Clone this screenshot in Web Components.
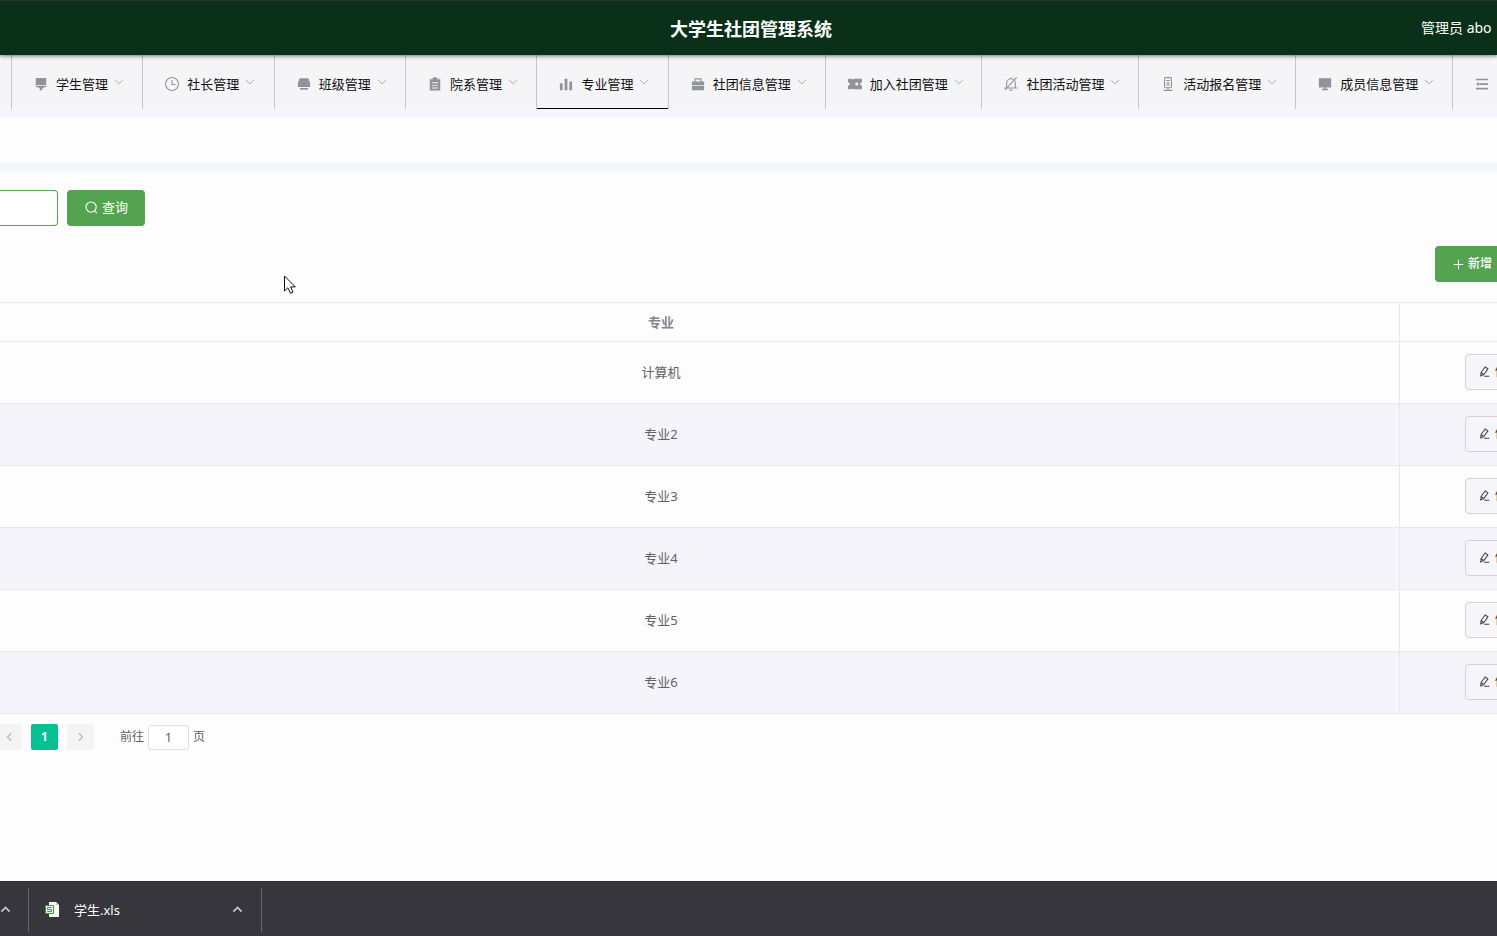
<!DOCTYPE html>
<html lang="zh-CN">
<head>
<meta charset="utf-8">
<title>大学生社团管理系统</title>
<style>
html,body{margin:0;height:100%}
body{font:13px/20px "Noto Sans","Noto Sans CJK SC",sans-serif;color:#606266;background:#fdfdfe;overflow:hidden}
</style>
</head>
<body>
<club-app></club-app>
<script>
const define = (name, css, html) => customElements.define(name, class extends HTMLElement {
  constructor() {
    super();
    this.attachShadow({ mode: 'open' }).innerHTML =
      `<style>*{box-sizing:border-box}svg{display:block;flex:none}button,input{font:inherit;margin:0}${css}</style>` +
      (typeof html === 'function' ? html(this) : html);
  }
});

const icons = {
  brush: '<path d="M2 1h12v8H2zM2 10h12v1l-3.500 1.200h-1V15h-3v-2.800h-1L2 11z"/>',
  clock: '<g fill="none" stroke="currentColor" stroke-width="1.200"><circle cx="8" cy="8" r="7.400"/><path d="M8 3.500v5h4"/></g>',
  printer: '<path d="M3 1.500h10L15 7v4.500H1V7zM3 12.500h10l-1 2H4z"/>',
  clipboard: '<path fill-rule="evenodd" d="M5 1h1.500l.7-1h1.600l.7 1H11v2h3v12.500H2V3h3zM4.500 6v1h7V6zm0 3v1h7V9zm0 3v1h7v-1z"/><path d="M2 2h2v1H2zm10 0h2v1h-2z"/>',
  bars: '<path d="M1 7h3.200v8H1zM6.400 2h3.200v13H6.400zM11.800 5H15v10h-3.200z"/>',
  briefcase: '<path fill-rule="evenodd" d="M4 1.500h8V5h3v4H1V5h3zm1.300 1.300V5h5.400V2.800zM1 10h14v5H1z"/>',
  ticket: '<path fill-rule="evenodd" d="M0 2h4.500l1 1 1-1H16v4a2 2 0 0 0 0 4v4H6.500l-1-1-1 1H0v-4a2 2 0 0 0 0-4zM10 5.500l-.8 1.600-1.700.3 1.200 1.200-.2 1.700 1.500-.8 1.500.8-.2-1.700 1.200-1.200-1.700-.3z"/>',
  bell: '<g fill="none" stroke="currentColor" stroke-width="1.200"><path d="M3 12.500V7a5 5 0 0 1 10 0v5.500M.5 12.500h15M6.500 15h3M8 .5V2M1 15 14.500.5"/></g>',
  mic: '<g fill="none" stroke="currentColor" stroke-width="1.200"><rect x="4" y=".7" width="8" height="11.500" rx="1.500"/><path d="M8 12.500v3M3 15.300h10M6 4h4M6 6.500h4M6 9h4"/></g>',
  monitor: '<path d="M1 1.500h14v10.500H1zM7 12h2v1.500h2.500V15h-7v-1.500H7z"/>',
  fold: '<path d="M1 2h14v1.800H1zM5 7.200h10V9H5zM1 12.400h14v1.800H1zM1 8.100 4.500 6v4.200z"/>',
  down: '<path d="m2 5 6 6 6-6" fill="none" stroke="currentColor" stroke-width="1.500"/>',
  up: '<path d="m2 11 6-6 6 6" fill="none" stroke="currentColor" stroke-width="2.500"/>',
  left: '<path d="m11 3-5 5 5 5" fill="none" stroke="currentColor" stroke-width="1.900"/>',
  right: '<path d="m5 3 5 5-5 5" fill="none" stroke="currentColor" stroke-width="1.900"/>',
  search: '<g fill="none" stroke="currentColor" stroke-width="1.400"><circle cx="7.500" cy="7.500" r="6.300"/><path d="m12 12 2.500 3"/></g>',
  plus: '<path d="M8 1v14M1 8h14" fill="none" stroke="currentColor" stroke-width="1.500"/>',
  edit: '<path d="M3 9.500 9 1.500l4 2.700-6 8.300-4.500 2zM3 9.500l4 3M7.500 15H15" fill="none" stroke="currentColor" stroke-width="1.500"/>'
};
const icon = (name, size) => `<svg width="${size}" height="${size}" viewBox="0 0 16 16" fill="currentColor" aria-hidden="true">${icons[name]}</svg>`;

define('club-header', `
:host{display:grid;grid-template-columns:1fr auto 1fr;align-items:center;height:55px;padding-left:5px;background:#0a3019;border-top:1px solid #28362c;color:#fff;position:relative;z-index:1;box-shadow:0 1px 4px #0008}
h1{grid-column:2;margin:0;padding-top:2px;font-size:18px;line-height:28px;font-weight:700}
span{justify-self:end;width:76px;font-size:14px;line-height:24px;white-space:nowrap}
`, '<h1>大学生社团管理系统</h1><span>管理员 abo</span>');

define('nav-item', `
:host{display:block;min-width:0;border-left:1px solid #c6c6cc}
a{display:flex;align-items:center;height:54px;padding:4px 0 0 22px;color:#101010;text-decoration:none;white-space:nowrap}
:host([active]) a{border-bottom:1px solid #000}
.icon{color:#909399;margin-right:8px}
.arrow{color:#a2a4a8;margin:0 0 4px 6px}
`, el => `<a href="#"><span class="icon">${icon(el.getAttribute('icon'), 14)}</span><slot></slot>${el.hasAttribute('bare') ? '' : `<span class="arrow">${icon('down', 10)}</span>`}</a>`);

define('club-nav', `
:host{display:grid;grid-template-columns:11px repeat(5,minmax(0,67fr)) repeat(5,minmax(0,80fr)) 45px;height:54px;background:#f5f4f7;overflow:hidden}
`, `<span></span>
<nav-item icon="brush">学生管理</nav-item><nav-item icon="clock">社长管理</nav-item><nav-item icon="printer">班级管理</nav-item><nav-item icon="clipboard">院系管理</nav-item><nav-item icon="bars" active>专业管理</nav-item><nav-item icon="briefcase">社团信息管理</nav-item><nav-item icon="ticket">加入社团管理</nav-item><nav-item icon="bell">社团活动管理</nav-item><nav-item icon="mic">活动报名管理</nav-item><nav-item icon="monitor">成员信息管理</nav-item><nav-item icon="fold" bare></nav-item>`);

define('club-toolbar', `
:host{display:block;padding-top:18px}
form{display:flex;gap:9px}
input{width:58px;height:36px;border:1px solid #53a351;border-left:0;border-radius:0 4px 4px 0;background:#fff;outline:0}
button{display:flex;align-items:center;height:36px;padding:0 18px;border:0;border-radius:4px;background:#53a351;color:#fff;white-space:nowrap}
form button{gap:4px;width:78px;padding-bottom:2px}
.actions{display:flex;justify-content:flex-end;margin:20px -20px 0 0}
.actions button{gap:4px;width:82px;font-size:12px;font-weight:500}
`, `<form><input type="text" aria-label="专业"><button type="button">${icon('search', 13)}查询</button></form>
<div class="actions"><button type="button">${icon('plus', 11)}新增</button></div>`);

define('club-table', `
:host{display:block;margin:20px -160px 0 -77px}
table{width:100%;table-layout:fixed;border-collapse:separate;border-spacing:0;border-top:1px solid #e8e9ee}
col.act{width:258px}
th,td{padding:0;text-align:center;border-bottom:1px solid #e8e9ee}
th{height:39px;color:#85878c;font-weight:700}
td{height:62px;padding-bottom:2px;color:#606266}
th+th,td+td{border-left:1px solid #e8e9ee;text-align:left;padding-left:65px}
tbody tr:nth-child(even){background:#f4f4fa}
button{display:flex;align-items:center;gap:5px;height:36px;padding:0 13px;border:1px solid #d9cfdc;border-radius:4px;background:#f6f5fa;color:#444;font-size:12px}
`, `<table><colgroup><col><col class="act"></colgroup><thead><tr><th>专业</th><th></th></tr></thead><tbody>${
['计算机','专业2','专业3','专业4','专业5','专业6'].map(t => `<tr><td>${t}</td><td><button type="button">${icon('edit', 11)}修改</button></td></tr>`).join('')}</tbody></table>`);

define('club-pager', `
:host{display:flex;align-items:center;margin-top:10px;font-size:12px}
button{display:flex;align-items:center;justify-content:center;width:27px;height:26px;padding:0;border:0;border-radius:2px;background:#f4f4f5;color:#bbbdc2;margin-right:9px}
.prev{width:22px;padding-right:5px}
.on{background:#06bf92;color:#fff;font-weight:700}
label{display:flex;align-items:center;gap:4px;margin-left:17px;white-space:nowrap}
input{width:41px;height:25px;padding:0;text-align:center;font-size:13px;color:#606266;border:1px solid #dcdfe6;border-radius:3px;background:#fff}
`, `<button type="button" class="prev" aria-label="上一页">${icon('left', 12)}</button><button type="button" class="on">1</button><button type="button" aria-label="下一页">${icon('right', 12)}</button><label>前往<input type="text" value="1">页</label>`);

define('download-bar', `
:host{display:flex;align-items:center;height:55px;padding-top:1px;background:#37363c;color:#fff;border-top:1px solid #2c2b31}
button{display:flex;border:0;background:none;color:#c8c8cc;padding:0;align-items:center}
.prev{width:29px;height:44px;border-right:1px solid #68676d}
.file{display:flex;align-items:center;width:233px;height:44px;padding:0 18px 0 16px;border-right:1px solid #68676d}
a{color:inherit;text-decoration:none;margin-left:15px;flex:1}
`, `<button type="button" class="prev" aria-label="展开">${icon('up', 11)}</button><div class="file"><svg width="14" height="16" viewBox="0 0 14 16"><path d="M4 0h7l3 3v12H4z" fill="#f4fff2"/><path d="M11 0v3h3" fill="#b8d9b2"/><path d="M.5 3.500h8v8h-8z" fill="#eefaec" stroke="#3d9a3c"/><path d="M6.700 5.500H2.500v2h4v2H2.300" fill="none" stroke="#3d9a3c"/></svg><a href="#">学生.xls</a><button type="button" aria-label="更多">${icon('up', 11)}</button></div>`);

define('mouse-pointer', `:host{position:absolute;left:284px;top:275px}`,
`<svg width="13" height="20" viewBox="0 0 13 20"><path d="M.5 1v15l3.400-3.200 2.600 5.500 2.500-1.200-2.400-5.200h4.700z" fill="#fff" stroke="#111"/></svg>`);

define('club-app', `
:host{display:flex;flex-direction:column;min-height:100vh;overflow:hidden}
.crumbs{height:63px;border:solid #f5f6fb;border-width:9px 0}
main{flex:1}
`, `<club-header></club-header><club-nav></club-nav><div class="crumbs"></div><main><club-toolbar></club-toolbar><club-table></club-table><club-pager></club-pager></main><download-bar></download-bar><mouse-pointer></mouse-pointer>`);
</script>
</body>
</html>
